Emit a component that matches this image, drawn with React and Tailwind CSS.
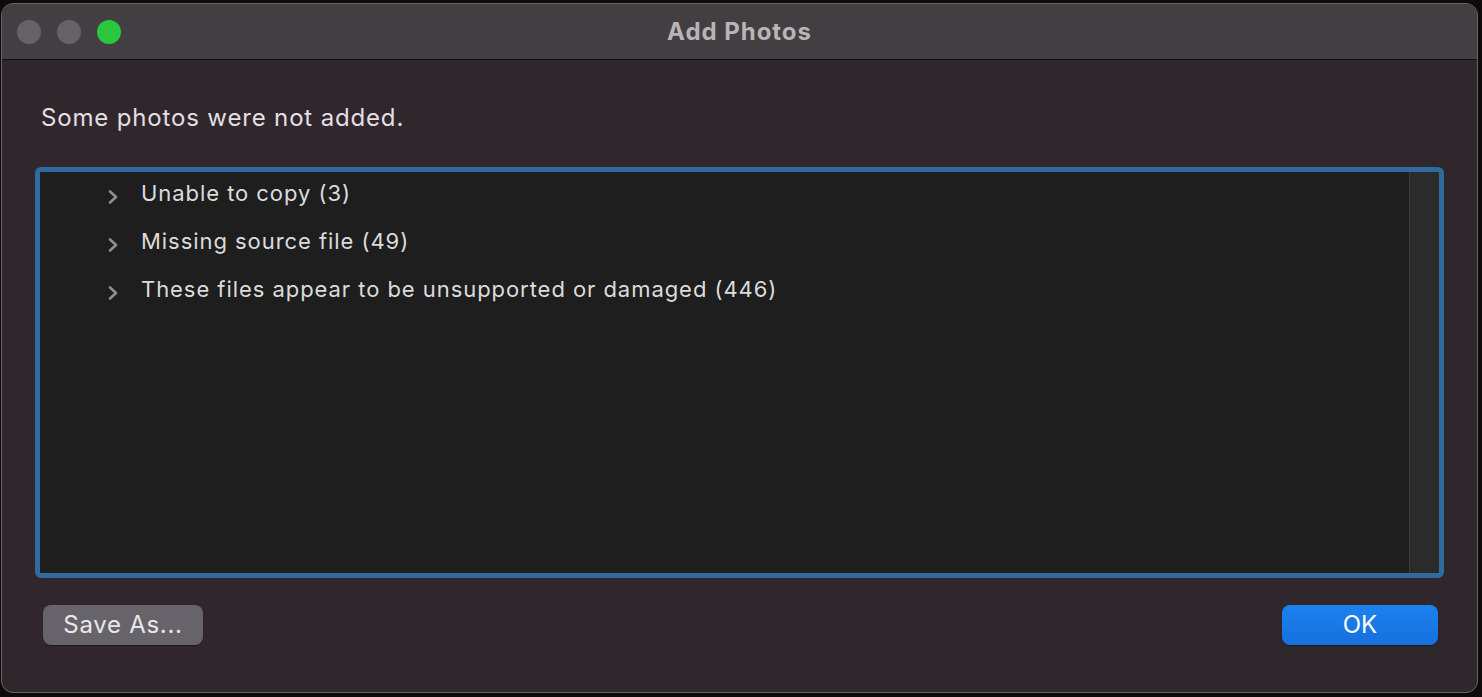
const rows = [
  "Unable to copy (3)",
  "Missing source file (49)",
  "These files appear to be unsupported or damaged (446)",
];

function Chevron() {
  return (
    <svg
      width="12"
      height="16"
      viewBox="0 0 12 16"
      className="ml-[67px] mr-[22px] mt-[8px] shrink-0"
      fill="none"
    >
      <path
        d="M3 2.5 L9 8 L3 13.5"
        stroke="#8e8e8e"
        strokeWidth="2.6"
        strokeLinecap="round"
        strokeLinejoin="round"
      />
    </svg>
  );
}

export default function App() {
  return (
    <div
      className="h-[697px] w-[1482px] overflow-hidden bg-[#0d0a09] pt-[3px] pl-[1px]"
      style={{ fontFamily: "Inter, 'Noto Sans', sans-serif" }}
    >
      <div className="flex h-[690px] w-[1477px] flex-col overflow-hidden rounded-[12px] border border-[#66616a] bg-[#30272d]">
        {/* title bar */}
        <div className="relative flex h-[56px] shrink-0 items-center border-b border-[#141012] bg-[#423e41] px-[15px]">
          <div className="flex gap-[16px]">
            <span className="h-[24px] w-[24px] rounded-full bg-[#676266]" />
            <span className="h-[24px] w-[24px] rounded-full bg-[#676266]" />
            <span className="h-[24px] w-[24px] rounded-full bg-[#2ac83f]" />
          </div>
          <div className="absolute inset-0 flex items-center justify-center text-[24px] font-bold tracking-[0.04em] text-[#b9b4b8]">
            Add Photos
          </div>
        </div>

        <div className="flex flex-1 flex-col px-[33px]">
          <p className="mt-[43px] pl-[6px] text-[24px] leading-[30px] tracking-[0.035em] text-[#e4dfe3]">
            Some photos were not added.
          </p>

          <div className="mt-[34px] flex h-[411px] shrink-0 overflow-hidden rounded-[6px] border-[5px] border-[#2f6b9e] bg-[#1e1e1e]">
            <ul className="-mt-[3px] flex-1">
              {rows.map((r) => (
                <li key={r} className="flex h-[48px] items-center text-[22px] tracking-[0.043em] text-[#dcdcdc]">
                  <Chevron />
                  <span>{r}</span>
                </li>
              ))}
            </ul>
            <div className="w-[30px] border-l border-[#3c3c3c] bg-[#2b2b2b]" />
          </div>

          <div className="mt-[27px] flex justify-between pl-[8px] pr-[6px]">
            <button
              type="button"
              className="h-[40px] w-[160px] rounded-[8px] bg-[#67636a] text-[24px] tracking-[0.03em] text-[#ebe7eb] shadow-[0_1px_1px_rgba(0,0,0,0.4)]"
            >
              Save As...
            </button>
            <button
              type="button"
              className="h-[40px] w-[156px] rounded-[8px] bg-gradient-to-b from-[#1c82ef] to-[#1570dc] text-[24px] text-white shadow-[0_1px_1px_rgba(0,0,0,0.4)]"
            >
              OK
            </button>
          </div>
        </div>
      </div>
    </div>
  );
}
